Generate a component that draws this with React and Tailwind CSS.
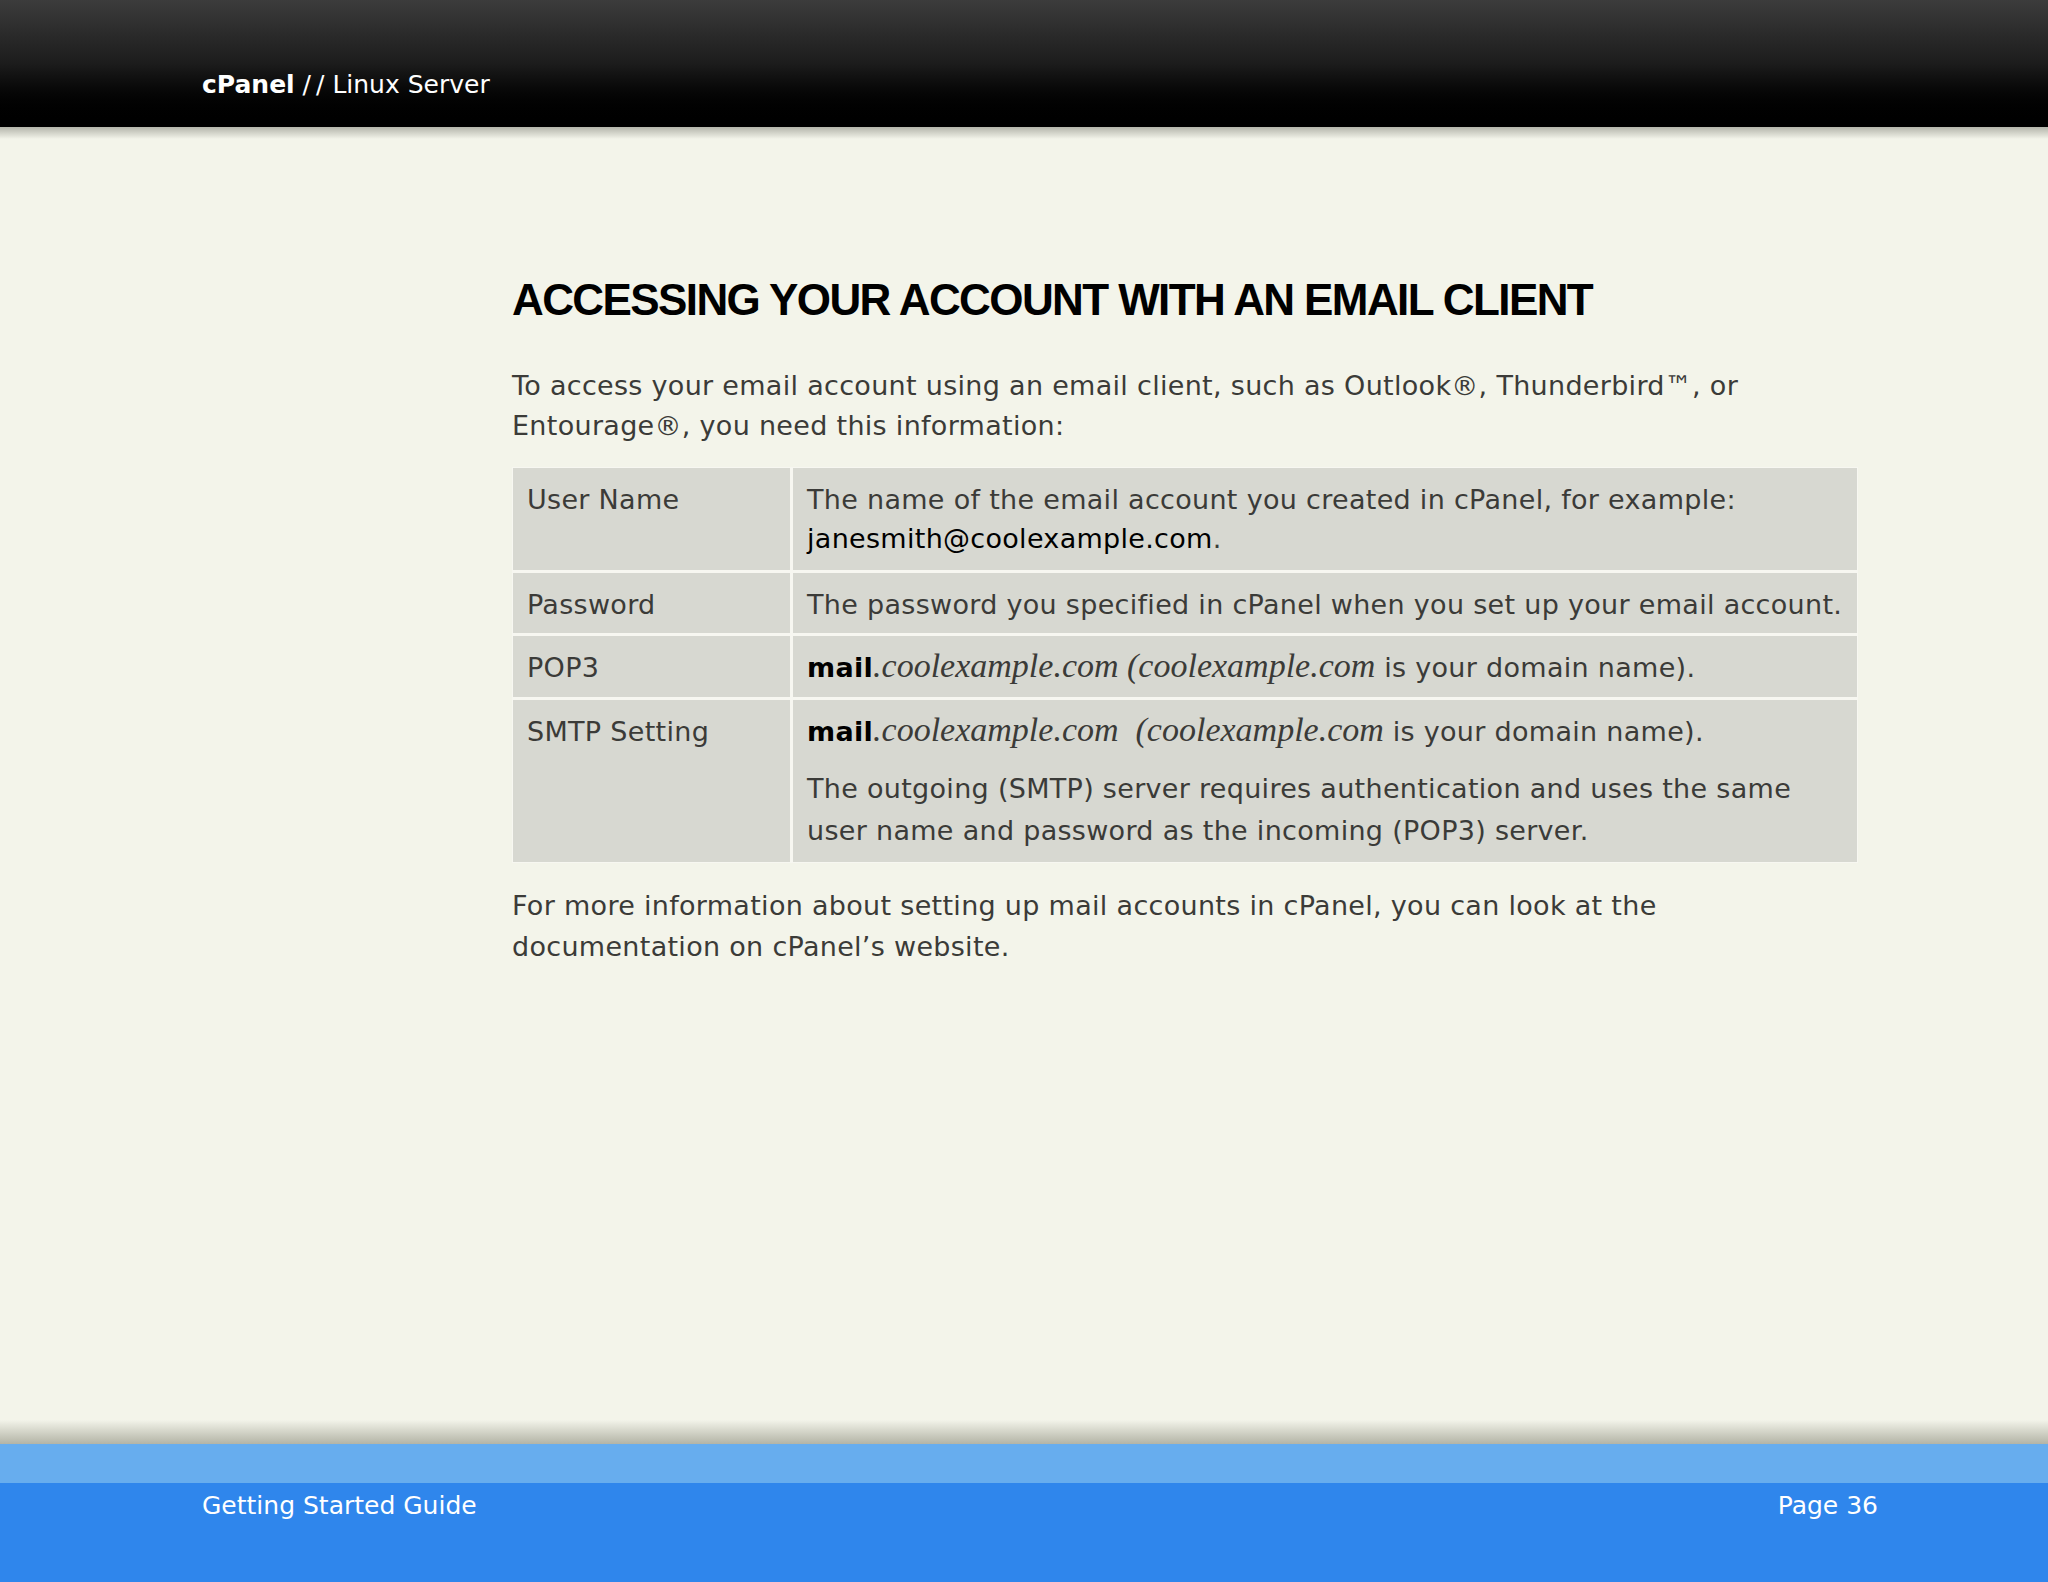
export default function App() {
  const body = { fontFamily: '"DejaVu Sans", "Open Sans", sans-serif' };
  const serif = { fontFamily: '"Liberation Serif", serif' };

  return (
    <div className="w-[2048px] h-[1582px] flex flex-col bg-[#f3f4ea] overflow-hidden" style={body}>
      {/* header */}
      <div className="h-[127px] shrink-0 bg-gradient-to-b from-[#3c3c3c] via-[#1c1c1c] to-black flex items-end pl-[202px] pb-[30px]">
        <div className="text-white text-[25px] leading-none">
          <span className="font-bold">cPanel</span> /&thinsp;/ Linux Server
        </div>
      </div>
      <div className="h-[12px] shrink-0 bg-gradient-to-b from-[#b4b5ab] to-[#f3f4ea]" />

      {/* content */}
      <div className="flex-1 pl-[512px] pr-[192px] pt-[139px]">
        <h1
          className="text-[44px] font-bold leading-none text-black tracking-[-1.6px]"
          style={{ fontFamily: '"Liberation Sans", Arial, sans-serif' }}
        >
          ACCESSING YOUR ACCOUNT WITH AN EMAIL CLIENT
        </h1>

        <p className="mt-[44px] w-[1344px] text-[27px] leading-[40px] tracking-[0.3px] text-[#3b3b38]">
          To access your email account using an email client, such as Outlook®, Thunderbird™, or Entourage®, you need this information:
        </p>

        <div className="mt-[21px] w-[1346px] grid grid-cols-[277px_1fr] gap-[3px] p-[1px] bg-[#f7f7f1] text-[27px] leading-[39px] tracking-[0.3px] text-[#3b3b38]">
          <div className="bg-[#d7d8d1] px-[14px] pt-[12px] pb-[12px]">User Name</div>
          <div className="bg-[#d7d8d1] px-[14px] pt-[12px] pb-[12px]">
            The name of the email account you created in cPanel, for example:
            <br />
            <span className="text-black">janesmith@coolexample.com</span>.
          </div>

          <div className="bg-[#d7d8d1] px-[14px] pt-[12px] pb-[9px]">Password</div>
          <div className="bg-[#d7d8d1] px-[14px] pt-[12px] pb-[9px] whitespace-nowrap">
            The password you specified in cPanel when you set up your email account.
          </div>

          <div className="bg-[#d7d8d1] px-[14px] pt-[12px] pb-[10px]">POP3</div>
          <div className="bg-[#d7d8d1] px-[14px] pt-[12px] pb-[10px]">
            <span className="font-bold text-black">mail</span>
            <span className="italic text-[34px] leading-none tracking-normal" style={serif}>.coolexample.com (coolexample.com</span> is your domain name).
          </div>

          <div className="bg-[#d7d8d1] px-[14px] pt-[12px] pb-[10px]">SMTP Setting</div>
          <div className="bg-[#d7d8d1] px-[14px] pt-[12px] pb-[10px]">
            <div>
              <span className="font-bold text-black">mail</span>
              <span className="italic text-[34px] leading-none tracking-normal" style={serif}>.coolexample.com&nbsp; (coolexample.com</span> is your domain name).
            </div>
            <div className="mt-[17px] leading-[42px]">
              The outgoing (SMTP) server requires authentication and uses the same
              <br />
              user name and password as the incoming (POP3) server.
            </div>
          </div>
        </div>

        <p className="mt-[22px] text-[27px] leading-[41px] tracking-[0.3px] text-[#3b3b38]">
          For more information about setting up mail accounts in cPanel, you can look at the
          <br />
          documentation on cPanel’s website.
        </p>
      </div>

      {/* footer */}
      <div className="h-[24px] shrink-0 bg-gradient-to-b from-[#f3f4ea] to-[#b3b4a6]" />
      <div className="h-[39px] shrink-0 bg-[#67adee]" />
      <div className="h-[99px] shrink-0 bg-[#2f86ec] flex justify-between pl-[202px] pr-[170px] pt-[8px] text-white text-[25px] leading-[30px]">
        <span>Getting Started Guide</span>
        <span>Page 36</span>
      </div>
    </div>
  );
}
